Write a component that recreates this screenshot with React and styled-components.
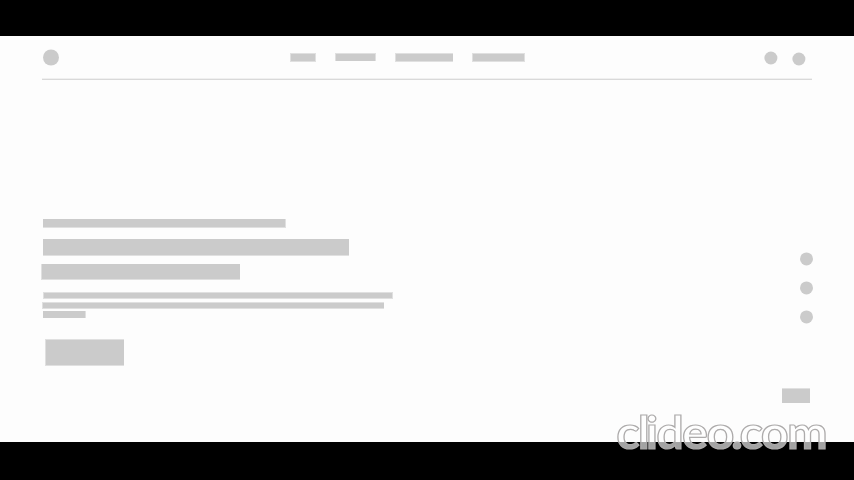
import React from "react";
import styled, { createGlobalStyle } from "styled-components";

const GlobalStyle = createGlobalStyle`
  * { box-sizing: border-box; }
  html, body { margin: 0; padding: 0; background: #000; overflow: hidden; }
`;

const Frame = styled.div`
  position: relative;
  width: 854px;
  height: 480px;
  padding: 36px 0 38px;
  background: #000;
`;

const Page = styled.div`
  height: 406px;
  background: #fdfdfd;
  display: flex;
  flex-direction: column;
  padding: 0 41px;
`;

const Header = styled.header`
  height: 44px;
  margin: 0 1px;
  display: flex;
  align-items: flex-start;
  border-bottom: 1px solid #d9d9d9;
  box-shadow: inset 0 -1px 0 #f0f0f0;
`;

const Dot = styled.div`
  flex: none;
  width: ${(p) => p.$size}px;
  height: ${(p) => p.$size}px;
  margin-top: ${(p) => p.$top || 0}px;
  border-radius: 50%;
  background: #cbcbcb;
`;

const Logo = styled(Dot)`
  margin-left: 1px;
  transform: translateY(0.5px);
`;

const Nav = styled.nav`
  display: flex;
  align-items: flex-start;
  gap: 19px;
  margin-left: 231px;
  padding-top: 17px;
`;

/* Placeholder block with a lighter one-pixel edge on the chosen sides. */
const Bar = styled.div`
  flex: none;
  width: ${(p) => p.$w}px;
  height: ${(p) => p.$h}px;
  margin-left: ${(p) => p.$indent || 0}px;
  margin-top: ${(p) => p.$top || 0}px;
  background: #cbcbcb;
  border: 0 solid #e0e0e0;
  border-width: ${(p) => p.$edge || "0"};
`;

const Actions = styled.div`
  display: flex;
  gap: 15px;
  margin-left: auto;
  padding: 15px 7px 0 0;
  transform: translate(0.4px, 0.5px);
`;

const Main = styled.main`
  flex: 1;
  display: flex;
  justify-content: space-between;
`;

const Hero = styled.section`
  padding-top: 139px;
`;

const Aside = styled.aside`
  display: flex;
  flex-direction: column;
  align-items: flex-end;
  padding-top: 172px;
`;

const Social = styled.div`
  display: flex;
  flex-direction: column;
  gap: 16px;
  transform: translateY(0.4px);
`;

const Tag = styled(Bar)`
  margin-right: 3px;
`;

const Watermark = styled.svg`
  position: absolute;
  left: 610px;
  top: 405px;
  width: 224px;
  height: 60px;
  will-change: transform;
  font-family: Lato, sans-serif;
  font-size: 45.5px;
  font-weight: 700;
`;

const STRETCH = 1.07;
const centers = [17.9, 33.7, 42, 60, 84.9, 110.5, 127, 141.3, 164.8, 197.3]
  .map((x) => (x / STRETCH).toFixed(2))
  .join(" ");

const hero = [
  { $w: 243, $h: 9, $indent: 2, $edge: "0 1px 1px 0" },
  { $w: 306, $h: 17, $indent: 2, $top: 11, $edge: "0 0 1px 0" },
  { $w: 199, $h: 16, $top: 8, $edge: "0 0 1px 1px" },
  { $w: 350, $h: 7, $indent: 2, $top: 12, $edge: "1px 1px 1px 1px" },
  { $w: 342, $h: 7, $indent: 1, $top: 3, $edge: "1px 0 1px 1px" },
  { $w: 43, $h: 7, $indent: 2, $top: 2, $edge: "0 1px 0 0" },
  { $w: 79, $h: 27, $indent: 4, $top: 21, $edge: "1px 0 1px 1px" },
];

export default function App() {
  return (
    <>
      <GlobalStyle />
      <Frame>
        <Page>
          <Header>
            <Logo $size={16} $top={13} />
            <Nav>
              <Bar $w={26} $h={9} $edge="1px" />
              <Bar $w={41} $h={8} $edge="1px 1px 0 1px" />
              <Bar $w={58} $h={9} $edge="1px 0 1px 1px" />
              <Bar $w={53} $h={9} $edge="1px" />
            </Nav>
            <Actions>
              <Dot $size={13} />
              <Dot $size={13} $top={1} />
            </Actions>
          </Header>
          <Main>
            <Hero>
              {hero.map((bar, i) => <Bar key={i} {...bar} />)}
            </Hero>
            <Aside>
              <Social>
                <Dot $size={13} />
                <Dot $size={13} />
                <Dot $size={13} />
              </Social>
              <Tag $w={28} $h={15} $top={65} $edge="1px 0 0 0" />
            </Aside>
          </Main>
        </Page>
        <Watermark viewBox="0 0 224 60" aria-label="clideo.com">
          <text
            x={centers}
            y="44"
            textAnchor="middle"
            transform={`scale(${STRETCH} 1)`}
            fill="#fff"
            fillOpacity="0.64"
            stroke="#adabab"
            strokeWidth="1.2"
          >
            clideo.com
          </text>
        </Watermark>
      </Frame>
    </>
  );
}
